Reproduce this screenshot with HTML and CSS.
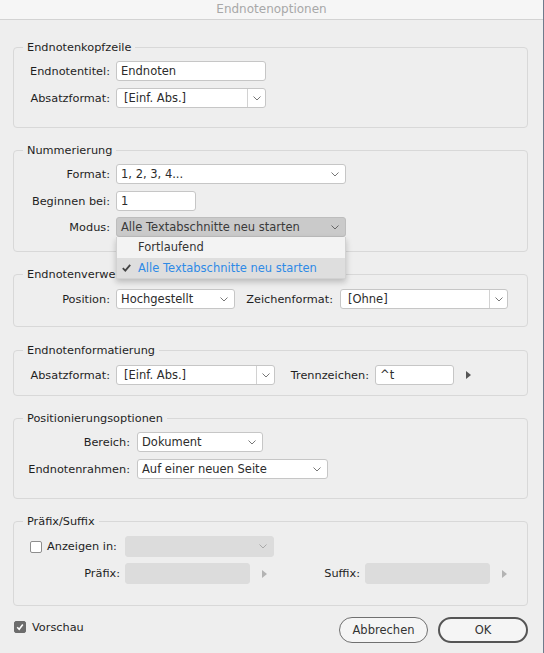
FILE: index.html
```html
<!DOCTYPE html>
<html lang="de">
<head>
    <meta charset="UTF-8">
    <meta name="viewport" content="width=device-width, initial-scale=1.0">
    <title>Endnotenoptionen</title>
    <link rel="stylesheet" href="styles.css">
</head>
<body>
    <div class="window">
        <div class="titlebar">Endnotenoptionen</div>

        <fieldset class="group g-head">
            <legend>Endnotenkopfzeile</legend>
            <div class="row">
                <span class="lbl">Endnotentitel:</span>
                <div class="field w150">Endnoten</div>
            </div>
            <div class="row">
                <span class="lbl">Absatzformat:</span>
                <div class="combo w150">
                    <span class="val">[Einf. Abs.]</span>
                    <span class="combo-btn"><svg class="chev" width="8" height="5" viewBox="0 0 8 5"><path d="M0.5 0.5 L4 4 L7.5 0.5"/></svg></span>
                </div>
            </div>
        </fieldset>

        <fieldset class="group g-num">
            <legend>Nummerierung</legend>
            <div class="row">
                <span class="lbl">Format:</span>
                <div class="select w230">
                    <span>1, 2, 3, 4...</span>
                    <svg class="chev" width="8" height="5" viewBox="0 0 8 5"><path d="M0.5 0.5 L4 4 L7.5 0.5"/></svg>
                </div>
            </div>
            <div class="row">
                <span class="lbl">Beginnen bei:</span>
                <div class="field w80">1</div>
            </div>
            <div class="row row-tight">
                <span class="lbl">Modus:</span>
                <div class="drop">
                    <div class="select open w230">
                        <span>Alle Textabschnitte neu starten</span>
                        <svg class="chev" width="8" height="5" viewBox="0 0 8 5"><path d="M0.5 0.5 L4 4 L7.5 0.5"/></svg>
                    </div>
                    <div class="menu">
                        <div class="menu-item first">Fortlaufend</div>
                        <div class="menu-item sel">
                            <svg class="tick" width="9" height="8" viewBox="0 0 9 8"><path d="M0.8 4.2 L3.3 6.6 L8.2 0.8"/></svg>
                            Alle Textabschnitte neu starten
                        </div>
                    </div>
                </div>
            </div>
        </fieldset>

        <fieldset class="group g-ref">
            <legend>Endnotenverweisnummer im Text</legend>
            <div class="row">
                <span class="lbl">Position:</span>
                <div class="select w119">
                    <span>Hochgestellt</span>
                    <svg class="chev" width="8" height="5" viewBox="0 0 8 5"><path d="M0.5 0.5 L4 4 L7.5 0.5"/></svg>
                </div>
                <span class="lbl lbl-zf">Zeichenformat:</span>
                <div class="combo w168">
                    <span class="val">[Ohne]</span>
                    <span class="combo-btn"><svg class="chev" width="8" height="5" viewBox="0 0 8 5"><path d="M0.5 0.5 L4 4 L7.5 0.5"/></svg></span>
                </div>
            </div>
        </fieldset>

        <fieldset class="group g-fmt">
            <legend>Endnotenformatierung</legend>
            <div class="row">
                <span class="lbl">Absatzformat:</span>
                <div class="combo w159">
                    <span class="val">[Einf. Abs.]</span>
                    <span class="combo-btn"><svg class="chev" width="8" height="5" viewBox="0 0 8 5"><path d="M0.5 0.5 L4 4 L7.5 0.5"/></svg></span>
                </div>
                <span class="lbl lbl-tz">Trennzeichen:</span>
                <div class="field w79">^t</div>
                <span class="tri"><svg width="5" height="8" viewBox="0 0 5 8"><path d="M0 0 L5 4 L0 8 Z"/></svg></span>
            </div>
        </fieldset>

        <fieldset class="group g-pos">
            <legend>Positionierungsoptionen</legend>
            <div class="row">
                <span class="lbl lbl-wide">Bereich:</span>
                <div class="select w126">
                    <span>Dokument</span>
                    <svg class="chev" width="8" height="5" viewBox="0 0 8 5"><path d="M0.5 0.5 L4 4 L7.5 0.5"/></svg>
                </div>
            </div>
            <div class="row">
                <span class="lbl lbl-wide">Endnotenrahmen:</span>
                <div class="select w191">
                    <span>Auf einer neuen Seite</span>
                    <svg class="chev" width="8" height="5" viewBox="0 0 8 5"><path d="M0.5 0.5 L4 4 L7.5 0.5"/></svg>
                </div>
            </div>
        </fieldset>

        <fieldset class="group g-fix">
            <legend>Präfix/Suffix</legend>
            <div class="row row-21">
                <span class="chk-label">
                    <span class="check"></span>
                    Anzeigen in:
                </span>
                <div class="select off w149">
                    <span></span>
                    <svg class="chev" width="8" height="5" viewBox="0 0 8 5"><path d="M0.5 0.5 L4 4 L7.5 0.5"/></svg>
                </div>
            </div>
            <div class="row row-21 row-tight">
                <span class="lbl lbl-fix">Präfix:</span>
                <div class="field off w125"></div>
                <span class="tri off"><svg width="5" height="8" viewBox="0 0 5 8"><path d="M0 0 L5 4 L0 8 Z"/></svg></span>
                <span class="lbl lbl-suf">Suffix:</span>
                <div class="field off w125"></div>
                <span class="tri off"><svg width="5" height="8" viewBox="0 0 5 8"><path d="M0 0 L5 4 L0 8 Z"/></svg></span>
            </div>
        </fieldset>

        <div class="footer">
            <span class="preview">
                <span class="check on"><svg width="10" height="10" viewBox="0 0 10 10"><path d="M2.2 5.2 L4.2 7.2 L7.8 2.6"/></svg></span>
                Vorschau
            </span>
            <span class="spacer"></span>
            <button class="btn">Abbrechen</button>
            <button class="btn btn-default">OK</button>
        </div>
    </div>
</body>
</html>
```

FILE: styles.css
```css
body {
    margin: 0;
    background: #eeeeee;
    font-family: "DejaVu Sans", sans-serif;
    font-size: 11.3px;
    color: #1e1e1e;
}
.window {
    width: 543px;
    height: 653px;
    border-right: 1px solid #6f7b8c;
    background: #eeeeee;
}
.titlebar {
    height: 19px;
    line-height: 19px;
    border-bottom: 1px solid #d3d3d3;
    background: #f6f6f6;
    text-align: center;
    color: #a8a8a8;
    font-size: 12px;
}

/* group boxes */
.group {
    margin: 15px 15px 0 13px;
    padding: 6px 14px 19px;
    border: 1px solid #d8d8d8;
    border-radius: 4px;
    min-width: 0;
}
.g-head {
    margin-top: 20px;
}
.g-num {
    padding-bottom: 14px;
}
.g-ref {
    padding-top: 7px;
    padding-bottom: 17px;
}
.g-fmt {
    margin-top: 16px;
    padding-top: 7px;
    padding-bottom: 10px;
}
.g-pos {
    padding-bottom: 19px;
}
.g-fix {
    padding-top: 7px;
    padding-bottom: 21px;
}
legend {
    padding: 0 4px;
    margin-left: -5px;
    line-height: 15px;
}

.row {
    display: flex;
    align-items: center;
    height: 20px;
}
.row + .row {
    margin-top: 7px;
}
.row.row-tight {
    margin-top: 6px;
}
.row-21 {
    height: 21px;
}
.lbl {
    display: flex;
    justify-content: flex-end;
    flex: none;
    width: 82px;
    margin-right: 6px;
    white-space: nowrap;
}
.lbl-wide {
    width: 102px;
    margin-right: 7px;
}
.lbl-zf {
    width: 87px;
    margin-left: 11px;
    margin-right: 7px;
}
.lbl-tz {
    width: 83px;
    margin-left: 11px;
}
.lbl-fix {
    width: 92px;
    margin-right: 5px;
}
.lbl-suf {
    width: 90px;
    margin-right: 5px;
}

/* controls */
.field,
.select,
.combo {
    box-sizing: border-box;
    flex: none;
    height: 100%;
    background: #fff;
    border: 1px solid #c6c6c6;
    border-radius: 3px;
    color: #2c2c2c;
    font-size: 11.5px;
    white-space: nowrap;
}
.field {
    padding: 0 4px;
    line-height: 18px;
}
.select {
    display: flex;
    align-items: center;
    justify-content: space-between;
    padding: 0 6px 0 4px;
}
.combo {
    display: flex;
    align-items: center;
}
.combo .val {
    flex: 1;
    padding-left: 7px;
}
.combo-btn {
    display: flex;
    align-items: center;
    justify-content: center;
    width: 17px;
    height: 100%;
    border-left: 1px solid #d2d2d2;
}
.chev path {
    fill: none;
    stroke: #777;
    stroke-width: 1;
}
.select.open {
    background: #cacaca;
    border-color: #bdbdbd;
    color: #3a3a3a;
}
.select.open .chev path {
    stroke: #666;
}
.select.off,
.field.off {
    background: #dcdcdc;
    border-color: #dcdcdc;
}
.select.off .chev path {
    stroke: #a9a9a9;
}
.tri {
    display: flex;
    align-items: center;
    justify-content: center;
    flex: none;
    width: 12px;
    margin-left: 8px;
}
.tri path {
    fill: #555;
}
.tri.off path {
    fill: #b3b3b3;
}

.w79 { width: 79px; }
.w80 { width: 80px; }
.w119 { width: 119px; }
.w125 { width: 125px; }
.w126 { width: 126px; }
.w149 { width: 149px; }
.w150 { width: 150px; }
.w159 { width: 159px; }
.w168 { width: 168px; }
.w191 { width: 191px; }
.w230 { width: 230px; }

/* open popup for Modus */
.drop {
    position: relative;
    height: 100%;
}
.menu {
    position: absolute;
    top: 100%;
    left: 0;
    z-index: 10;
    width: 230px;
    background: #f3f3f3;
    border: 1px solid #d2d2d2;
    border-top: none;
    box-sizing: border-box;
    box-shadow: 0 3px 6px rgba(0, 0, 0, 0.22);
    font-size: 11.5px;
}
.menu-item {
    position: relative;
    height: 20px;
    line-height: 20px;
    padding-left: 21px;
    color: #333;
}
.menu-item.first {
    height: 21px;
    line-height: 21px;
}
.menu-item.sel {
    background: #dedede;
    color: #2e8ae6;
}
.tick {
    position: absolute;
    left: 5px;
    top: 6px;
}
.tick path {
    fill: none;
    stroke: #444;
    stroke-width: 1.8;
}

/* checkboxes */
.chk-label {
    display: flex;
    align-items: center;
    flex: none;
    width: 92px;
    margin-right: 5px;
    white-space: nowrap;
}
.check {
    display: flex;
    align-items: center;
    justify-content: center;
    box-sizing: border-box;
    width: 12px;
    height: 12px;
    margin: 0 5px 0 2px;
    border: 1px solid #8e8e8e;
    border-radius: 2px;
    background: #fff;
}
.check.on {
    margin: 0 6px 0 0;
    background: #6c6c6c;
    border-color: #6c6c6c;
}
.check.on path {
    fill: none;
    stroke: #fff;
    stroke-width: 1.6;
}

/* bottom bar */
.footer {
    display: flex;
    align-items: flex-start;
    height: 26px;
    margin: 11px 15px 0 14px;
}
.preview {
    display: flex;
    align-items: center;
    height: 16px;
    margin-top: 2px;
}
.spacer {
    flex: 1;
}
.btn {
    box-sizing: border-box;
    width: 89px;
    height: 26px;
    padding: 0;
    border: 1px solid #707070;
    border-radius: 13px;
    background: #f5f5f5;
    color: #333;
    font-family: "DejaVu Sans", sans-serif;
    font-size: 11.5px;
}
.btn-default {
    width: 90px;
    margin-left: 10px;
    border: 2px solid #555;
}
```
